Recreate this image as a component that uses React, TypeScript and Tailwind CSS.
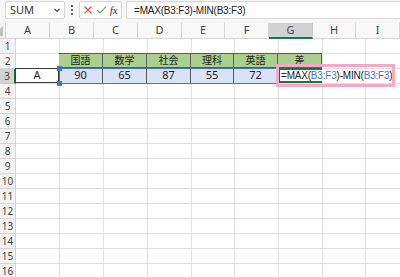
import React from "react";

const cols = [
  { key: "A", w: "w-[44px]" },
  { key: "B", w: "w-[44px]" },
  { key: "C", w: "w-[44px]" },
  { key: "D", w: "w-[44px]" },
  { key: "E", w: "w-[43px]" },
  { key: "F", w: "w-[44px]" },
  { key: "G", w: "w-[44px]" },
  { key: "H", w: "w-[43px]" },
  { key: "I", w: "w-[44px]" },
];

const subjects = ["国語", "数学", "社会", "理科", "英語", "差"];
const scores = ["90", "65", "87", "55", "72"];

const formulaFont = { fontFamily: '"Liberation Sans", Arial, sans-serif' };

const Formula = () => (
  <span className="whitespace-nowrap text-[10px] tracking-[-0.2px]" style={formulaFont}>
    =MAX(<span className="text-[#4472c4]">B3:F3</span>)-MIN(
    <span className="text-[#4472c4]">B3:F3</span>)
  </span>
);

const App = () => {
  const rows = Array.from({ length: 16 }, (_, i) => i + 1);

  const cellContent = (r: number, ci: number) => {
    const c = cols[ci].key;
    if (r === 2 && ci >= 1 && ci <= 6) {
      return (
        <div className="h-full w-full bg-[#a9d08e] border-r border-b border-t border-[#5a5a5a] flex items-center justify-center text-[10px] text-[#222]">
          {subjects[ci - 1]}
        </div>
      );
    }
    if (r === 3 && c === "A") {
      return (
        <div className="h-full w-full border border-[#3a3a3a] flex items-center justify-center text-[11px] text-[#222]">
          A
        </div>
      );
    }
    if (r === 3 && ci >= 1 && ci <= 5) {
      return (
        <div className="h-full w-full bg-[#dae3f3] border-r border-[#5a5a5a] flex items-center justify-center text-[11px] text-[#222]">
          {scores[ci - 1]}
        </div>
      );
    }
    if (r === 3 && c === "G") {
      return (
        <div className="h-full w-full relative border-2 border-[#217346] border-l-[#2f5597] text-[#222] overflow-visible">
          <div className="absolute left-[1px] top-0 bottom-0 z-10 bg-white pr-[2px] flex items-center">
            <Formula />
          </div>
        </div>
      );
    }
    return null;
  };

  return (
    <div
      className="w-[400px] h-[277px] overflow-hidden bg-white relative"
      style={{ fontFamily: '"Noto Sans", "Noto Sans CJK JP", sans-serif' }}
    >
      {/* formula bar */}
      <div className="h-[23px] bg-[#f7f7f7] flex items-start pt-[1px] pl-[5px] gap-0">
        <div className="w-[60px] h-[18px] bg-white border border-[#d6d6d6] rounded-[2px] flex items-center justify-between pl-[4px] pr-[3px] text-[11px] text-[#333]">
          <span>SUM</span>
          <svg width="8" height="8" viewBox="0 0 8 8">
            <path d="M1.5 3 L4 5.5 L6.5 3" stroke="#444" strokeWidth="1.2" fill="none" />
          </svg>
        </div>
        <div className="w-[14px] h-[18px] flex flex-col items-center justify-center gap-[2px]">
          <div className="w-[2px] h-[2px] bg-[#666]" />
          <div className="w-[2px] h-[2px] bg-[#666]" />
          <div className="w-[2px] h-[2px] bg-[#666]" />
        </div>
        <div className="w-[43px] h-[18px] bg-white border border-[#d6d6d6] rounded-[2px] flex items-center justify-around px-[2px]">
          <svg width="10" height="10" viewBox="0 0 10 10">
            <path d="M1.5 1.5 L8.5 8.5 M8.5 1.5 L1.5 8.5" stroke="#e0474c" strokeWidth="1.1" />
          </svg>
          <svg width="11" height="10" viewBox="0 0 11 10">
            <path d="M1 5 L4 8 L10 1.5" stroke="#4ea24e" strokeWidth="1.1" fill="none" />
          </svg>
          <span
            className="text-[11px] italic text-[#333] leading-none"
            style={{ fontFamily: '"Liberation Serif", serif' }}
          >
            fx
          </span>
        </div>
        <div
          className="ml-[4px] flex-1 h-[18px] bg-white border border-[#d6d6d6] border-r-0 rounded-l-[2px] flex items-center pl-[7px] text-[10px] tracking-[-0.2px] text-[#222]"
          style={formulaFont}
        >
          =MAX(B3:F3)-MIN(B3:F3)
        </div>
      </div>

      {/* sheet */}
      <div className="flex flex-col">
        <div className="flex h-[16px]">
          <div className="w-[16px] h-full bg-[#f3f3f3] border-r border-b border-[#d4d4d4] relative">
            <div className="absolute right-[2px] bottom-[2px] w-0 h-0 border-l-[10px] border-l-transparent border-b-[10px] border-b-[#bfbfbf]" />
          </div>
          {cols.map((c) => (
            <div
              key={c.key}
              className={`${c.w} h-full shrink-0 flex items-center justify-center text-[11px] text-[#444] border-r ${
                c.key === "G"
                  ? "bg-[#d2d2d2] border-b-2 border-b-[#217346] border-r-[#c8c8c8]"
                  : "bg-[#f8f8f8] border-b border-[#d4d4d4]"
              }`}
            >
              {c.key}
            </div>
          ))}
        </div>
        {rows.map((r) => (
          <div key={r} className="flex h-[15px]">
            <div
              className={`w-[16px] h-full shrink-0 flex items-center justify-center text-[10px] text-[#444] border-b ${
                r === 3
                  ? "bg-[#d2d2d2] border-r-2 border-r-[#217346] border-b-[#c8c8c8]"
                  : "bg-[#f3f3f3] border-r border-[#d4d4d4]"
              }`}
            >
              {r}
            </div>
            {cols.map((c, ci) => (
              <div
                key={c.key}
                className={`${c.w} h-full shrink-0 border-r border-b border-[#e1e1e1] relative`}
              >
                <div className="absolute -left-[1px] -top-[1px] right-0 bottom-0 flex">
                  {cellContent(r, ci)}
                </div>
              </div>
            ))}
          </div>
        ))}
      </div>

      {/* range highlight on B3:F3 */}
      <div className="absolute left-[59px] top-[68px] w-[220px] h-[16px] border-[1.5px] border-[#4472c4] pointer-events-none">
        <div className="absolute -left-[3px] -top-[3px] w-[5px] h-[5px] bg-[#4472c4]" />
        <div className="absolute -left-[3px] -bottom-[3px] w-[5px] h-[5px] bg-[#4472c4]" />
      </div>

      {/* pink callout */}
      <div className="absolute left-[276px] top-[64px] w-[119px] h-[23px] border-[3px] border-[#f4a9c9] pointer-events-none z-20" />
    </div>
  );
};

export default App;
